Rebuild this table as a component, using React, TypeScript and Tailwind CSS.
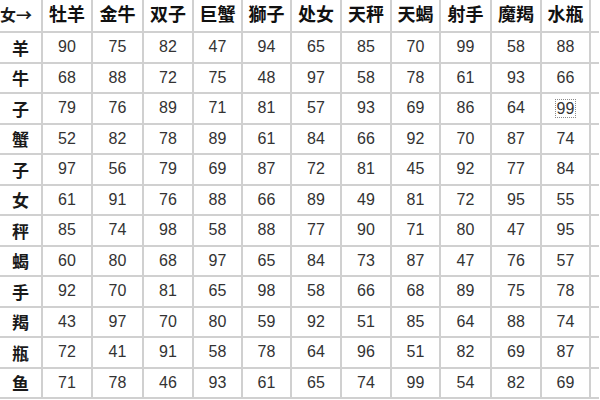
const signs = ['牡羊', '金牛', '双子', '巨蟹', '獅子', '处女', '天秤', '天蝎', '射手', '魔羯', '水瓶'];

const rows: { name: string; scores: number[] }[] = [
  { name: '羊', scores: [90, 75, 82, 47, 94, 65, 85, 70, 99, 58, 88] },
  { name: '牛', scores: [68, 88, 72, 75, 48, 97, 58, 78, 61, 93, 66] },
  { name: '子', scores: [79, 76, 89, 71, 81, 57, 93, 69, 86, 64, 99] },
  { name: '蟹', scores: [52, 82, 78, 89, 61, 84, 66, 92, 70, 87, 74] },
  { name: '子', scores: [97, 56, 79, 69, 87, 72, 81, 45, 92, 77, 84] },
  { name: '女', scores: [61, 91, 76, 88, 66, 89, 49, 81, 72, 95, 55] },
  { name: '秤', scores: [85, 74, 98, 58, 88, 77, 90, 71, 80, 47, 95] },
  { name: '蝎', scores: [60, 80, 68, 97, 65, 84, 73, 87, 47, 76, 57] },
  { name: '手', scores: [92, 70, 81, 65, 98, 58, 66, 68, 89, 75, 78] },
  { name: '羯', scores: [43, 97, 70, 80, 59, 92, 51, 85, 64, 88, 74] },
  { name: '瓶', scores: [72, 41, 91, 58, 78, 64, 96, 51, 82, 69, 87] },
  { name: '鱼', scores: [71, 78, 46, 93, 61, 65, 74, 99, 54, 82, 69] },
];

const cjk = "font-['Noto_Sans_CJK_SC',sans-serif]";

const App = () => {
  return (
    <div className="w-[600px] h-[400px] overflow-hidden bg-white">
      <div className="w-max grid grid-cols-[41px_48px_49px_48px_47px_47px_48px_48px_47px_49px_48px_47px_8px] grid-rows-[31px_repeat(12,28.5px)] gap-[2px] pb-[2px] bg-[#d0d0d0]">
        <div className={`bg-white flex items-center pb-[3px] text-[16px] font-bold text-[#1a1a1a] ${cjk}`}>
          女→
        </div>
        {signs.map((s) => (
          <div
            key={s}
            className={`bg-white flex items-center justify-center pb-[4px] text-[18px] font-bold text-[#111] ${cjk}`}
          >
            {s}
          </div>
        ))}
        <div className="bg-white" />

        {rows.map((row, r) => (
          <div key={r} className="contents">
            <div className={`bg-white flex items-center justify-center text-[17px] font-bold text-[#1a1a1a] ${cjk}`}>
              {row.name}
            </div>
            {row.scores.map((v, c) => (
              <div
                key={c}
                className="bg-white flex items-center justify-center text-[16px] text-[#333] font-['Liberation_Sans',Arial,sans-serif]"
              >
                {r === 2 && c === 10 ? (
                  <span className="border border-dotted border-[#8a8a8a] px-[1px] leading-[17px]">{v}</span>
                ) : (
                  v
                )}
              </div>
            ))}
            <div className="bg-white" />
          </div>
        ))}
      </div>
    </div>
  );
};

export default App;
